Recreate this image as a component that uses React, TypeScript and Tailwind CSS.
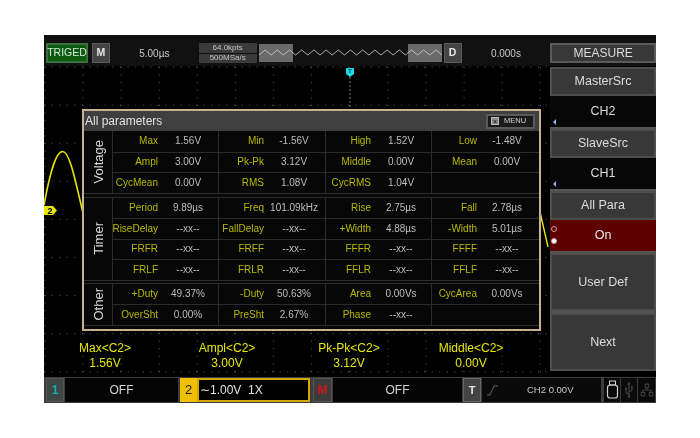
import React from "react";
import { Usb, Network } from "lucide-react";

type Cell = [string, string];
const voltage: Cell[][] = [
  [["Max", "1.56V"], ["Min", "-1.56V"], ["High", "1.52V"], ["Low", "-1.48V"]],
  [["Ampl", "3.00V"], ["Pk-Pk", "3.12V"], ["Middle", "0.00V"], ["Mean", "0.00V"]],
  [["CycMean", "0.00V"], ["RMS", "1.08V"], ["CycRMS", "1.04V"], ["", ""]],
];
const timer: Cell[][] = [
  [["Period", "9.89µs"], ["Freq", "101.09kHz"], ["Rise", "2.75µs"], ["Fall", "2.78µs"]],
  [["RiseDelay", "--xx--"], ["FallDelay", "--xx--"], ["+Width", "4.88µs"], ["-Width", "5.01µs"]],
  [["FRFR", "--xx--"], ["FRFF", "--xx--"], ["FFFR", "--xx--"], ["FFFF", "--xx--"]],
  [["FRLF", "--xx--"], ["FRLR", "--xx--"], ["FFLR", "--xx--"], ["FFLF", "--xx--"]],
];
const other: Cell[][] = [
  [["+Duty", "49.37%"], ["-Duty", "50.63%"], ["Area", "0.00Vs"], ["CycArea", "0.00Vs"]],
  [["OverSht", "0.00%"], ["PreSht", "2.67%"], ["Phase", "--xx--"], ["", ""]],
];

function Section({ title, rows }: { title: string; rows: Cell[][] }) {
  return (
    <div className="flex shrink-0 border-b border-[#2c2c2c]">
      <div className="w-[29px] shrink-0 border-r border-[#2c2c2c] flex items-center justify-center">
        <span className="text-[13px] text-[#d8d8d8] [writing-mode:vertical-rl] rotate-180 leading-none">{title}</span>
      </div>
      <div className="flex-1 flex flex-col">
        {rows.map((r, i) => (
          <div key={i} className="grid grid-cols-[106px_107px_106px_1fr] h-[20.5px] border-t border-[#2c2c2c] first:border-t-0">
            {r.map((c, j) => (
              <div key={j} className="relative flex items-center border-r last:border-r-0 border-[#2c2c2c] leading-none">
                <span className="w-[45px] shrink-0 flex justify-end text-[10px] text-[#b8b800] whitespace-nowrap">{c[0]}</span>
                <span className="w-[60px] shrink-0 text-center text-[10px] text-[#bdbdbd] whitespace-nowrap">{c[1]}</span>
              </div>
            ))}
          </div>
        ))}
      </div>
    </div>
  );
}

function SideBtn({ children, h }: { children: React.ReactNode; h: string }) {
  return (
    <div className={`${h} flex items-center justify-center bg-[#383838] border-2 border-[#4e4e4e] text-[12.5px] text-[#dcdcdc]`}>
      {children}
    </div>
  );
}

function SideVal({ children }: { children: React.ReactNode }) {
  return (
    <div className="relative h-[31px] flex items-center justify-center bg-[#070707] text-[12.5px] text-[#dcdcdc]">
      {children}
      <span className="absolute left-[3px] bottom-[2px] w-0 h-0 border-y-[3px] border-y-transparent border-r-[3px] border-r-[#8fb0f0]" />
    </div>
  );
}

function Readout({ a, b }: { a: string; b: string }) {
  return (
    <div className="w-[122px] flex flex-col items-center text-[12px] leading-[15px] text-[#e6e600]">
      <span>{a}</span>
      <span>{b}</span>
    </div>
  );
}

function Zigzag() {
  let d = "M0 11";
  for (let i = 0; i < 15; i++) {
    d += ` l6.1 -5 l6.1 5`;
  }
  return (
    <svg width="183" height="18" className="block" viewBox="0 0 183 18">
      <rect x="0" y="0" width="34" height="18" fill="#6a6a6a" />
      <rect x="149" y="0" width="34" height="18" fill="#6a6a6a" />
      <path d={d} fill="none" stroke="#d0d0d0" strokeWidth="0.8" />
    </svg>
  );
}

function ScopeGrid() {
  return (
    <svg className="absolute inset-0" width="505" height="308" viewBox="0 0 505 308">
      {Array.from({ length: 14 }).map((_, k) => (
        <line key={k} x1={1 + 38.1 * k} x2={1 + 38.1 * k} y1="1" y2="306" stroke="#5a5a5a" strokeWidth="1" strokeDasharray="1 6.6" />
      ))}
      {Array.from({ length: 9 }).map((_, k) => (
        <line key={k} x1="0" x2="505" y1={1 + 38.1 * k} y2={1 + 38.1 * k} stroke="#5a5a5a" strokeWidth="1" strokeDasharray="1 6.6" />
      ))}
      <path d="M0 139 C5 112 11 85.5 18.7 85.5 C26 85.5 32 118 39 147" fill="none" stroke="#e6e600" strokeWidth="1.6" />
      <path d="M496 146 L504 181" fill="none" stroke="#e6e600" strokeWidth="1.4" />
      <line x1="306" x2="306" y1="11" y2="43" stroke="#7a7a7a" strokeDasharray="2 2" />
      <path d="M302 2 H310 V8 L306 11 L302 8 Z" fill="#18dbe6" />
      <path d="M0 140 H9 L13 144.5 L9 149 H0 Z" fill="#e6e600" />
    </svg>
  );
}

export default function App() {
  return (
    <div className="w-[700px] h-[438px] bg-white pt-[35px] pl-[44px] [font-family:'Liberation_Sans',Arial,sans-serif] blur-[0.4px]">
      <div className="w-[612px] h-[368px] bg-black flex flex-col overflow-hidden">
        {/* top bar */}
        <div className="h-[31px] pt-[8px] bg-[#111111] border-b-[3px] border-b-[#111111]">
          <div className="flex h-[20px] items-stretch w-full pl-[2px]">
            <div className="w-[42px] flex items-center justify-center bg-[#0c5a10] border-2 border-[#3d6e3d] text-[10.5px] text-[#d8ead8]">TRIGED</div>
            <div className="ml-[4px] w-[18px] flex items-center justify-center bg-[#444444] border border-[#5c5c5c] text-[10.5px] font-bold text-[#e6e6e6]">M</div>
            <div className="ml-[2px] w-[85px] flex items-center justify-center text-[10px] text-[#c8c8c8]">5.00µs</div>
            <div className="ml-[2px] w-[58px] flex flex-col gap-px text-[8px] text-[#c4c4c4] leading-none">
              <span className="h-[9.5px] bg-[#3a3a3a] flex items-center justify-center">64.0kpts</span>
              <span className="h-[9.5px] bg-[#3a3a3a] flex items-center justify-center">500MSa/s</span>
            </div>
            <div className="ml-[2px] w-[183px] flex items-center"><Zigzag /></div>
            <div className="ml-[2px] w-[18px] flex items-center justify-center bg-[#444444] border border-[#5c5c5c] text-[10.5px] font-bold text-[#e6e6e6]">D</div>
            <div className="ml-[2px] w-[85px] flex items-center justify-center text-[10px] text-[#c8c8c8]">0.000s</div>
            <div className="ml-[2px] w-[106px] flex items-center justify-center bg-[#383838] border-2 border-[#5a5a5a] text-[12px] text-[#dcdcdc]">MEASURE</div>
          </div>
        </div>

        <div className="flex h-[308px]">
          {/* screen */}
          <div className="relative w-[505px] h-[308px] bg-black flex flex-col justify-end pb-[3px]">
            <ScopeGrid />
            <span className="absolute left-[3.5px] top-[139.5px] text-[9px] font-bold leading-[10px] text-black">2</span>
            <span className="absolute left-[304px] top-[1px] text-[6px] font-bold leading-[8px] text-[#064048]">T</span>
            {/* modal */}
            <div className="absolute left-[38px] top-[43px] w-[459px] h-[222px] border-[2px] border-[#c9b08f] bg-[#070707] flex flex-col">
              <div className="h-[20px] shrink-0 flex items-center justify-between bg-[#3f3f3f] pl-[1px] pr-[4px] text-[12px] text-[#e2e2e2]">
                <span>All parameters</span>
                <span className="w-[49px] h-[15px] flex items-center gap-[5px] pl-[3px] bg-[#1a1a1a] border-2 border-[#5a5a5a] text-[7.5px] text-[#d4d4d4]">
                  <span className="w-[8px] h-[8px] bg-[#8a8a8a] border border-[#bbbbbb] flex items-center justify-center text-[7px] leading-none text-black">×</span>
                  MENU
                </span>
              </div>
              <div className="mb-[3px] shrink-0"><Section title="Voltage" rows={voltage} /></div>
              <div className="mb-[2px] shrink-0 border-t border-[#2c2c2c]"><Section title="Timer" rows={timer} /></div>
              <div className="shrink-0 border-t border-[#2c2c2c]"><Section title="Other" rows={other} /></div>
            </div>
            {/* readouts */}
            <div className="relative flex">
              <Readout a="Max<C2>" b="1.56V" />
              <Readout a="Ampl<C2>" b="3.00V" />
              <Readout a="Pk-Pk<C2>" b="3.12V" />
              <Readout a="Middle<C2>" b="0.00V" />
            </div>
          </div>
          {/* side */}
          <div className="ml-[1px] w-[106px] h-[304px] mt-[1px] flex flex-col gap-[2px] bg-[#555555]">
            <div>
              <SideBtn h="h-[29px]">MasterSrc</SideBtn>
              <SideVal>CH2</SideVal>
            </div>
            <div>
              <SideBtn h="h-[29px]">SlaveSrc</SideBtn>
              <SideVal>CH1</SideVal>
            </div>
            <div>
              <SideBtn h="h-[29px]">All Para</SideBtn>
              <div className="relative h-[31px] flex items-center justify-center bg-[#5e0000] text-[12.5px] text-[#e6e6e6]">
                On
                <span className="absolute left-[1px] top-[6px] w-[6px] h-[6px] rounded-full border border-[#c8a0a0]" />
                <span className="absolute left-[1px] top-[18px] w-[6px] h-[6px] rounded-full bg-[#ffffff] border border-[#c8a0a0]" />
              </div>
            </div>
            <SideBtn h="h-[58px]">User Def</SideBtn>
            <SideBtn h="h-[58px]">Next</SideBtn>
          </div>
        </div>

        {/* bottom bar */}
        <div className="mt-[3px] h-[26px] flex items-stretch gap-[1px] bg-[#3c3c3c] py-[1px] pl-[2px]">
          <div className="w-[18px] flex items-center justify-center bg-[#3f4545] border border-[#555555] text-[12px] font-bold text-[#10b0b8]">1</div>
          <div className="w-[113px] flex items-center justify-center bg-[#050505] text-[12px] text-[#d4d4d4]">OFF</div>
          <div className="ml-[1px] w-[17px] flex items-center justify-center bg-[#f0c000] text-[13px] text-[#222222]">2</div>
          <div className="w-[113px] -ml-[1px] flex items-center pl-[1px] bg-black border-2 border-[#d4a800] text-[12px] text-[#e0e0e0] whitespace-pre">∼1.00V  1X</div>
          <div className="ml-[2px] w-[19px] flex items-center justify-center bg-[#3c3c3c] border border-[#555555] text-[12px] font-bold text-[#d01818]">M</div>
          <div className="w-[129px] flex items-center justify-center bg-[#050505] text-[12px] text-[#d4d4d4]">OFF</div>
          <div className="w-[18px] flex items-center justify-center bg-[#444444] border border-[#666666] text-[11px] font-bold text-[#e6e6e6]">T</div>
          <div className="w-[119px] flex items-center bg-[#0a0a0a] pl-[3px] text-[9.5px] text-[#c8c8c8]">
            <svg width="14" height="14" viewBox="0 0 14 14" className="shrink-0"><path d="M2 12 H5 L9 3 H13" fill="none" stroke="#777777" strokeWidth="0.8" /></svg>
            <span className="ml-[28px]">CH2 0.00V</span>
          </div>
          <div className="ml-[2px] w-[16px] flex items-center justify-center bg-[#0a0a0a]">
            <svg width="13" height="20" viewBox="0 0 13 20"><rect x="3.5" y="1" width="6" height="4" fill="none" stroke="#d0d0d0" strokeWidth="1" /><rect x="1.5" y="5" width="10" height="13" rx="2.5" fill="none" stroke="#d0d0d0" strokeWidth="1.2" /></svg>
          </div>
          <div className="w-[16px] flex items-center justify-center bg-[#0a0a0a]"><Usb size={14} color="#404040" className="-rotate-45" /></div>
          <div className="w-[17px] flex items-center justify-center bg-[#0a0a0a]"><Network size={14} color="#404040" /></div>
        </div>
      </div>
    </div>
  );
}
